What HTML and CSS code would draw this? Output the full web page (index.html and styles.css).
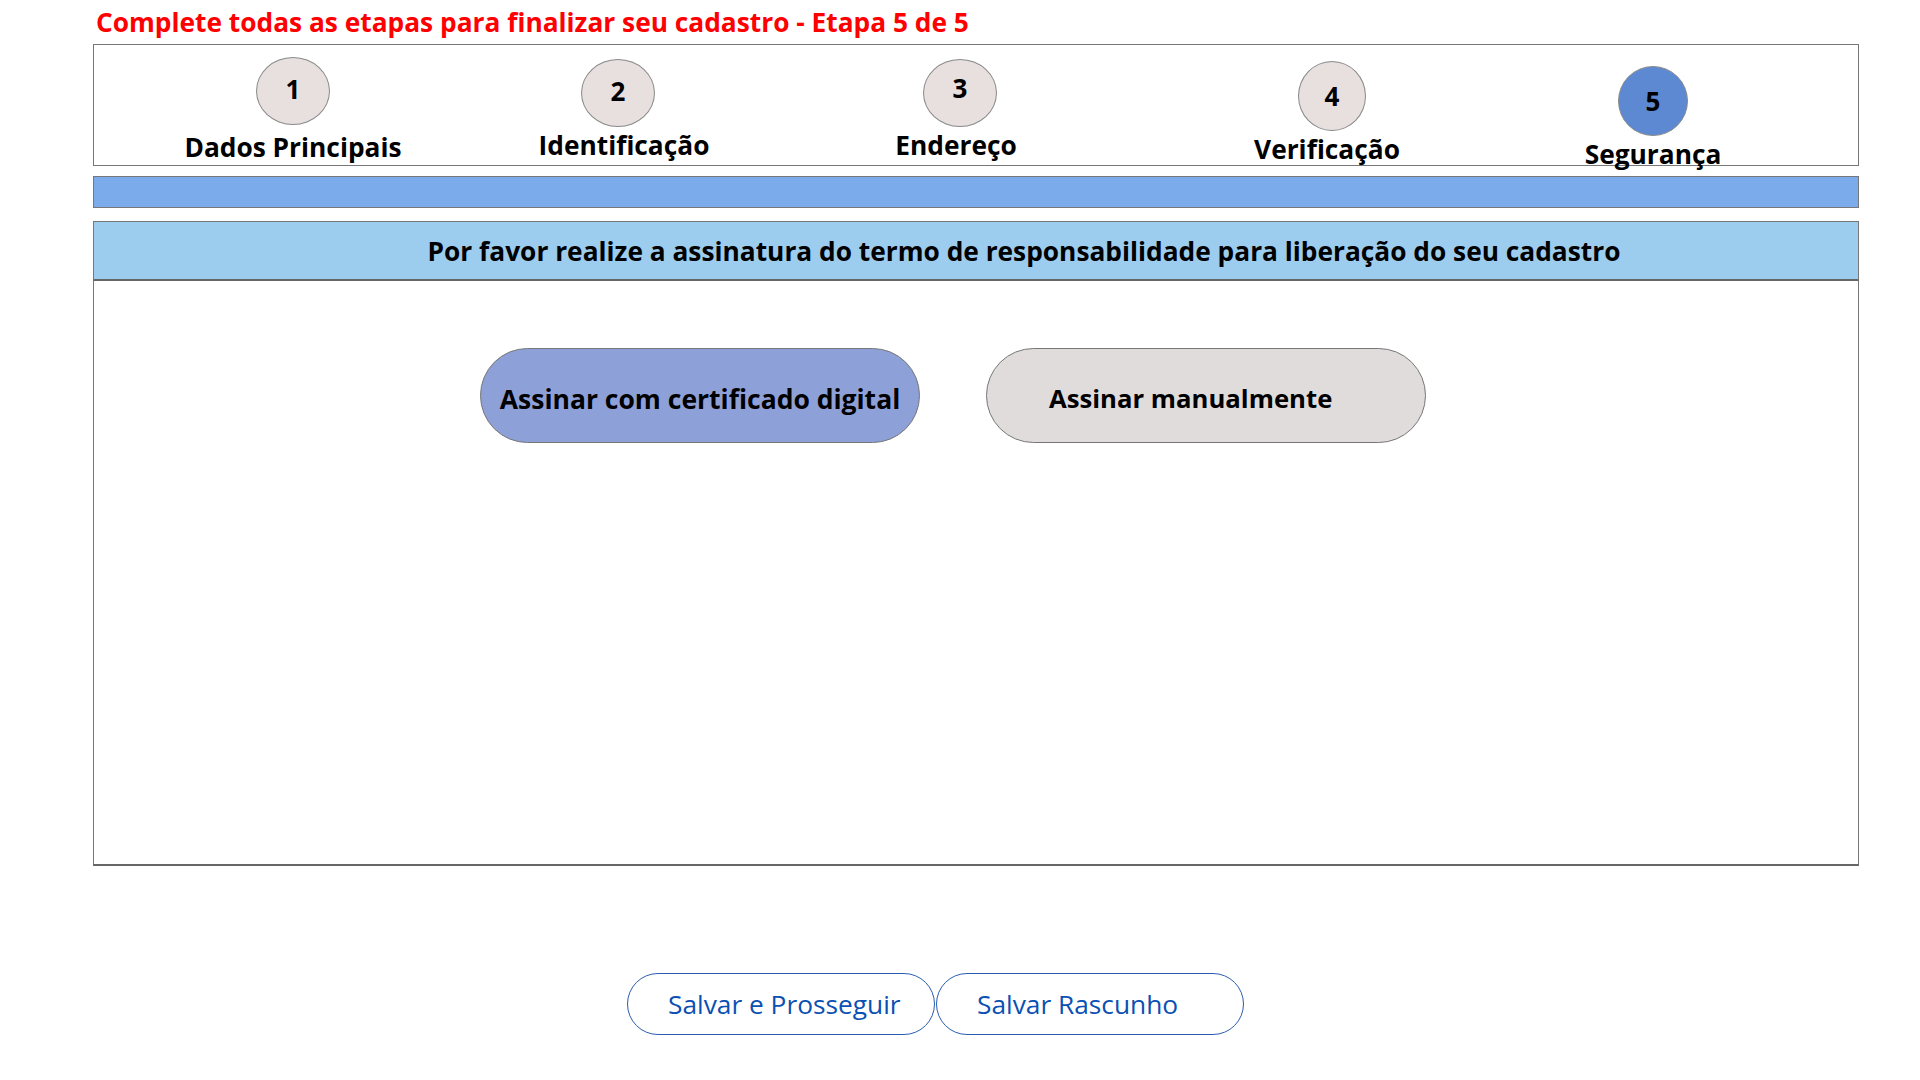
FILE: index.html
```html
<!DOCTYPE html>
<html lang="pt-BR">
<head>
<meta charset="utf-8">
<title>Cadastro - Etapa 5 de 5</title>
<link rel="stylesheet" href="styles.css">
</head>
<body>
<div class="page">
  <h1 class="title">Complete todas as etapas para finalizar seu cadastro - Etapa 5 de 5</h1>
  <div class="stepper">
    <div class="step step-1"><div class="circle">1</div><div class="label">Dados Principais</div></div>
    <div class="step step-2"><div class="circle">2</div><div class="label">Identificação</div></div>
    <div class="step step-3"><div class="circle">3</div><div class="label">Endereço</div></div>
    <div class="step step-4"><div class="circle">4</div><div class="label">Verificação</div></div>
    <div class="step step-5"><div class="circle active">5</div><div class="label">Segurança</div></div>
  </div>
  <div class="progress"></div>
  <div class="panel">
    <div class="panel-header">Por favor realize a assinatura do termo de responsabilidade para liberação do seu cadastro</div>
    <div class="panel-body">
      <button class="sign sign-digital">Assinar com certificado digital</button>
      <button class="sign sign-manual">Assinar manualmente</button>
    </div>
  </div>
</div>
<div class="footer">
  <button class="action">Salvar e Prosseguir</button>
  <button class="action">Salvar Rascunho</button>
</div>
</body>
</html>
```
FILE: styles.css
```css
* { box-sizing: border-box; }
html, body { margin: 0; padding: 0; background: #fff; }
body { font-family: "Open Sans", "Noto Sans", sans-serif; color: #000; }

.page { margin-left: 93px; width: 1766px; }

.title {
  margin: 0;
  padding: 5px 0 0 3px;
  height: 44px;
  font-size: 26.3px;
  line-height: 35px;
  font-weight: 700;
  color: #ff0000;
}

.stepper {
  height: 122px;
  border: 1px solid #777;
  display: flex;
  align-items: flex-start;
}
.step {
  width: 240px;
  display: flex;
  flex-direction: column;
  align-items: center;
  gap: 3px;
}
.step-1 { margin-left: 79px; padding-top: 12px; }
.step-2 { margin-left: 85px; padding-top: 14px; }
.step-3 { margin-left: 102px; padding-top: 14px; }
.step-4 { margin-left: 132px; padding-top: 16px; }
.step-5 { margin-left: 81px; padding-top: 21px; }

.circle {
  width: 74px;
  height: 68px;
  border-radius: 50%;
  border: 1px solid #8a8a8a;
  background: #e8dfdf;
  display: flex;
  align-items: center;
  justify-content: center;
  font-size: 26px;
  font-weight: 700;
  line-height: 1;
}
.step-1 .circle { padding-bottom: 4px; }
.step-2 .circle { padding-bottom: 5px; }
.step-3 .circle { padding-bottom: 10px; }
.step-4 .circle { width: 68px; height: 70px; padding-bottom: 1px; }
.step-5 .circle { width: 70px; height: 70px; }
.circle.active { background: #5c89d1; }

.label {
  font-size: 26.3px;
  font-weight: 700;
  line-height: 30px;
  white-space: nowrap;
}
.step-1 .label { margin-top: 4px; }
.step-2 .label { margin-left: 12px; }
.step-3 .label { margin-right: 8px; }
.step-4 .label { margin-right: 10px; }

.progress {
  margin-top: 10px;
  height: 32px;
  background: #7babeb;
  border: 1px solid #777;
}

.panel { margin-top: 13px; }
.panel-header {
  height: 60px;
  background: #9dcdee;
  border: 1px solid #777;
  border-bottom: 2px solid #666;
  display: flex;
  align-items: center;
  justify-content: center;
  padding-left: 96px;
  font-size: 26.3px;
  font-weight: 700;
}
.panel-body {
  height: 585px;
  border-left: 1px solid #777;
  border-right: 1px solid #777;
  border-bottom: 2px solid #666;
  padding: 67px 0 0 386px;
  display: flex;
  align-items: flex-start;
  gap: 66px;
}

.sign {
  width: 440px;
  height: 95px;
  border-radius: 48px;
  border: 1px solid #777;
  font-family: inherit;
  font-size: 26.5px;
  font-weight: 700;
  color: #000;
  cursor: pointer;
  padding-top: 7px;
}
.sign-digital { background: #8ea0d8; text-align: center; }
.sign-manual { background: #e0dcdc; text-align: left; padding-left: 62px; font-size: 25.7px; }

.footer {
  margin-top: 107px;
  padding-left: 627px;
  display: flex;
  gap: 1px;
}
.action {
  width: 308px;
  height: 62px;
  border-radius: 31px;
  border: 1px solid #2a5db0;
  background: #fff;
  color: #0b50b3;
  font-family: inherit;
  font-size: 26.3px;
  font-weight: 400;
  text-align: left;
  padding: 0 0 0 40px;
  cursor: pointer;
}
```
